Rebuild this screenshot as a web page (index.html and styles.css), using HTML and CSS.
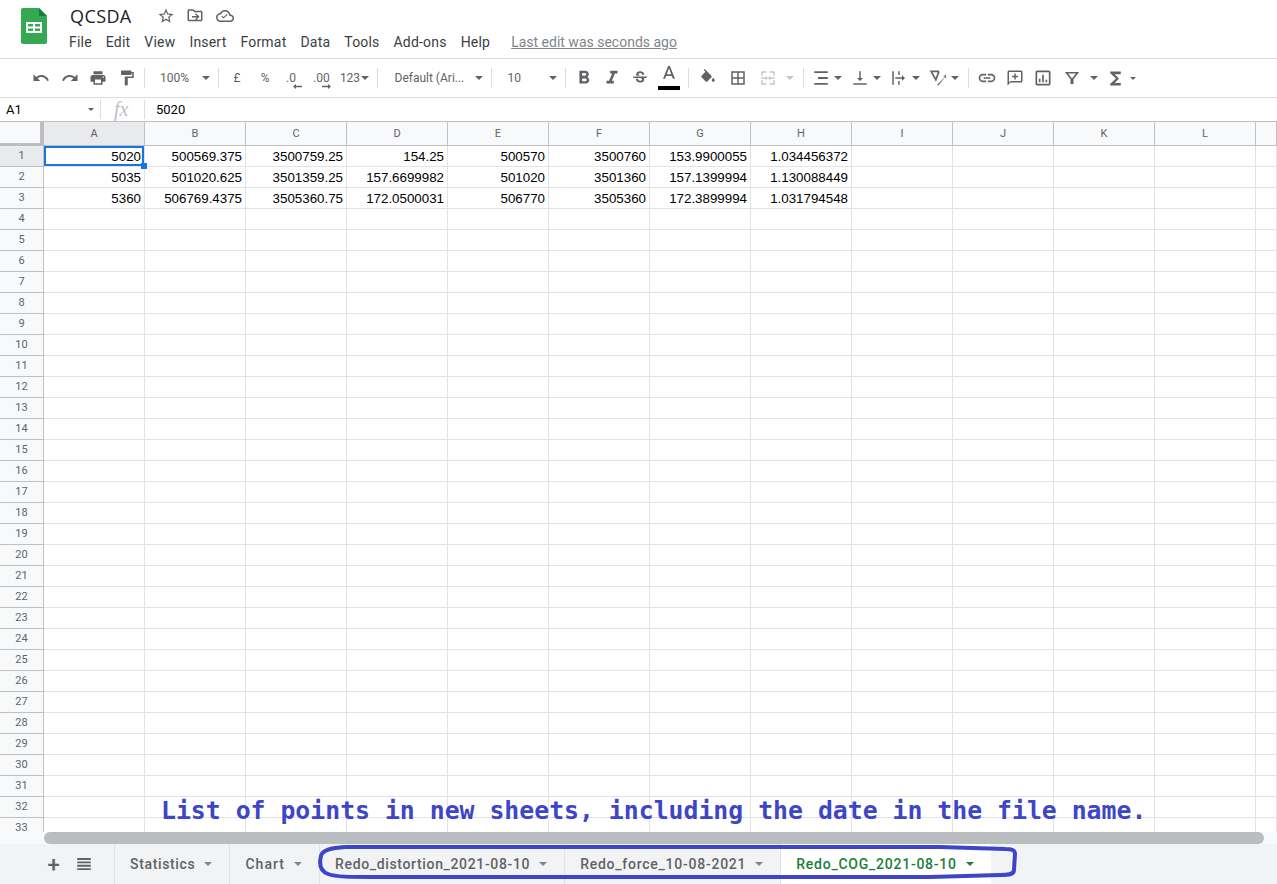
FILE: index.html
```html
<!DOCTYPE html>
<html lang="en">
<head>
    <meta charset="UTF-8">
    <title>QCSDA - Google Sheets</title>
    <link rel="stylesheet" href="styles.css">
</head>
<body>
    <div class="app">
        <header class="top">
            <svg class="logo" viewBox="0 0 26 36">
                <path fill="#34a853" d="M2 0h16l8 8v26a2 2 0 0 1-2 2H2a2 2 0 0 1-2-2V2a2 2 0 0 1 2-2z"/>
                <path fill="#188038" d="M18 0l8 8h-8z"/>
                <path fill="#fff" d="M5 14h16v11H5zm2 2v2.5h5V16zm7 0v2.5h5V16zm-7 4.5V23h5v-2.5zm7 0V23h5v-2.5z" fill-rule="evenodd"/>
            </svg>
            <div class="top-main">
                <div class="title-row">
                    <span class="doc-title">QCSDA</span>
                    <svg class="title-ico star-ico" viewBox="0 0 24 24"><path d="M22 9.24l-7.19-.62L12 2 9.19 8.63 2 9.24l5.46 4.73L5.82 21 12 17.27 18.18 21l-1.63-7.03L22 9.24zM12 15.4l-3.76 2.27 1-4.28-3.32-2.88 4.38-.38L12 6.1l1.71 4.04 4.38.38-3.32 2.88 1 4.28L12 15.4z"/></svg>
                    <svg class="title-ico" viewBox="0 0 24 24"><path d="M20 6h-8l-2-2H4c-1.1 0-2 .9-2 2v12c0 1.1.9 2 2 2h16c1.1 0 2-.9 2-2V8c0-1.1-.9-2-2-2zm0 12H4V6h5.17l2 2H20v10zM12 10.5l2.5 2.5H8v2h6.500L12 17.500l1.400 1.100L18 14l-4.600-4.600z" transform="translate(0 -1)"/></svg>
                    <svg class="title-ico" viewBox="0 0 24 24"><path d="M19.35 10.04C18.67 6.590 15.640 4 12 4 9.110 4 6.600 5.640 5.350 8.040 2.340 8.360 0 10.910 0 14c0 3.310 2.690 6 6 6h13c2.760 0 5-2.240 5-5 0-2.640-2.050-4.780-4.650-4.960zM19 18H6c-2.210 0-4-1.790-4-4 0-2.050 1.530-3.760 3.560-3.970l1.070-.11.5-.95C8.080 7.140 9.940 6 12 6c2.620 0 4.880 1.860 5.390 4.430l.3 1.500 1.530.11c1.560.1 2.780 1.410 2.780 2.960 0 1.650-1.350 3-3 3zM10 13.200l-1.700-1.700-1.100 1.100 2.800 2.800 5.600-5.100-1.100-1.100z"/></svg>
                </div>
                <nav class="menu">
                    <span>File</span><span>Edit</span><span>View</span><span>Insert</span><span>Format</span><span>Data</span><span>Tools</span><span>Add-ons</span><span>Help</span>
                    <a class="last-edit">Last edit was seconds ago</a>
                </nav>
            </div>
        </header>

        <div class="toolbar">
            <span class="btn"><svg class="ico" viewBox="0 0 24 24"><path d="M12.500 8c-2.650 0-5.050.99-6.900 2.600L2 7v9h9l-3.620-3.620c1.390-1.160 3.160-1.880 5.120-1.880 3.540 0 6.550 2.310 7.600 5.500l2.370-.78C21.080 11.030 17.150 8 12.500 8z"/></svg></span>
            <span class="btn"><svg class="ico" viewBox="0 0 24 24"><path d="M18.400 10.600C16.550 8.990 14.150 8 11.500 8c-4.650 0-8.580 3.030-9.960 7.220L3.900 16c1.050-3.190 4.050-5.500 7.600-5.500 1.950 0 3.730.72 5.120 1.880L13 16h9V7l-3.600 3.600z"/></svg></span>
            <span class="btn"><svg class="ico" viewBox="0 0 24 24"><path d="M19 8H5c-1.660 0-3 1.340-3 3v6h4v4h12v-4h4v-6c0-1.660-1.340-3-3-3zm-3 11H8v-5h8v5zm3-7c-.55 0-1-.45-1-1s.45-1 1-1 1 .45 1 1-.45 1-1 1zm-1-9H6v4h12V3z"/></svg></span>
            <span class="btn"><svg class="ico" viewBox="0 0 24 24"><path d="M18 4V3c0-.55-.45-1-1-1H5c-.55 0-1 .45-1 1v4c0 .55.45 1 1 1h12c.55 0 1-.45 1-1V6h1v4H9v11c0 .55.45 1 1 1h2c.55 0 1-.45 1-1v-9h8V4h-3z"/></svg></span>
            <i class="sep sep-undo"></i>
            <span class="select select-zoom">100%<i class="caret"></i></span>
            <i class="sep"></i>
            <span class="btn btn-first">£</span>
            <span class="btn">%</span>
            <span class="btn"><svg class="num-ico" viewBox="0 0 28 24"><text x="6" y="16">.0</text><path d="M13 20.500l3-2.500v1.700h6v1.600h-6V23z"/></svg></span>
            <span class="btn"><svg class="num-ico" viewBox="0 0 28 24"><text x="5" y="16">.00</text><path d="M23 20.500l-3-2.500v1.700h-6v1.600h6V23z"/></svg></span>
            <span class="num-format">123<i class="caret"></i></span>
            <i class="sep sep-num"></i>
            <span class="select select-font">Default (Ari...<i class="caret"></i></span>
            <i class="sep"></i>
            <span class="select select-size">10<i class="caret"></i></span>
            <i class="sep"></i>
            <span class="btn btn-first"><svg class="ico ico-22" viewBox="0 0 24 24"><path d="M15.600 10.790c.97-.67 1.650-1.770 1.650-2.790 0-2.260-1.750-4-4-4H7v14h7.040c2.090 0 3.710-1.700 3.710-3.790 0-1.520-.86-2.820-2.150-3.420zM10 6.500h3c.83 0 1.500.67 1.500 1.500s-.67 1.500-1.500 1.500h-3v-3zm3.500 9H10v-3h3.500c.83 0 1.500.67 1.500 1.500s-.67 1.500-1.500 1.500z"/></svg></span>
            <span class="btn"><svg class="ico ico-22" viewBox="0 0 24 24"><path d="M10 4v3h2.210l-3.420 8H6v3h8v-3h-2.210l3.420-8H18V4z"/></svg></span>
            <span class="btn"><svg class="ico" viewBox="0 0 24 24"><path d="M6.850 7.080C6.850 4.370 9.450 3 12.240 3c1.640 0 3 .49 3.900 1.280.77.65 1.460 1.730 1.460 3.240h-3.010c0-.31-.05-.59-.15-.85-.29-.86-1.200-1.280-2.250-1.280-1.860 0-2.340 1.020-2.340 1.700 0 .48.25.88.74 1.210.38.25.77.48 1.410.7H7.390c-.21-.34-.54-.89-.54-1.920zM21 12v-2H3v2h9.620c1.150.45 1.960.75 1.960 1.970 0 1-.81 1.670-2.280 1.670-1.540 0-2.930-.54-2.930-2.510H6.400c0 .55.08 1.130.24 1.580.81 2.290 3.290 3.300 5.670 3.300 2.270 0 5.300-.89 5.300-4.050 0-.3-.01-1.160-.48-1.940H21V12z"/></svg></span>
            <span class="btn btn-color"><svg class="ico ico-22" viewBox="0 0 24 24"><path d="M11 1L5.500 15h2.250l1.120-3h6.250l1.120 3h2.250L13 1h-2zm-1.380 9L12 3.670 14.380 10H9.620z"/></svg><i class="color-bar"></i></span>
            <i class="sep sep-color"></i>
            <span class="btn btn-fill"><svg class="ico" viewBox="0 0 24 24"><path d="M16.560 8.940L7.620 0 6.210 1.410l2.380 2.380-5.150 5.150c-.59.59-.59 1.540 0 2.120l5.500 5.500c.29.29.68.44 1.060.44s.77-.15 1.060-.44l5.500-5.500c.59-.58.59-1.530 0-2.120zM19 11.500s-2 2.170-2 3.500c0 1.100.9 2 2 2s2-.9 2-2c0-1.330-2-3.500-2-3.500z"/></svg></span>
            <span class="btn btn-grid"><svg class="ico" viewBox="0 0 24 24"><path d="M3 3v18h18V3H3zm8 16H5v-6h6v6zm0-8H5V5h6v6zm8 8h-6v-6h6v6zm0-8h-6V5h6v6z"/></svg></span>
            <span class="btn btn-grid"><svg class="ico ico-off" viewBox="0 0 24 24"><path d="M3 3h7v2H5v4H3zm11 0h7v6h-2V5h-5zM3 15h2v4h5v2H3zm16 0h2v6h-7v-2h5zM3 11h6V9l3 3-3 3v-2H3zm18 0h-6V9l-3 3 3 3v-2h6z"/></svg></span>
            <span class="caret-box"><i class="caret caret-off"></i></span>
            <i class="sep sep-merge"></i>
            <span class="dd"><svg class="ico" viewBox="0 0 24 24"><path d="M3 3h18v2.400H3zm5 7.800h13v2.400H8zM3 18.600h18V21H3z"/></svg><i class="caret"></i></span>
            <span class="dd"><svg class="ico" viewBox="0 0 24 24"><path d="M16 12h-3V3h-2v9H8l4 4zM3 19h18v2H3z"/></svg><i class="caret"></i></span>
            <span class="dd"><svg class="ico" viewBox="0 0 24 24"><path d="M3 3h2v18H3zm8 0h2v5h-2zm0 13h2v5h-2zM7 11h9V8l4 4-4 4v-3H7z"/></svg><i class="caret"></i></span>
            <span class="dd"><svg class="ico ico-20" viewBox="0 0 24 24"><path d="M2 3h11l.9 2.100L9.600 16.400 2 3zm3.400 2l3.800 6.600L11.700 5zM11 20l9.500-9.500-2.500-.5 4-2-1 5-1-1.500L12.500 21z"/></svg><i class="caret"></i></span>
            <i class="sep sep-rotate"></i>
            <span class="btn btn-first"><svg class="ico ico-20" viewBox="0 0 24 24"><path d="M3.900 12c0-1.710 1.390-3.100 3.100-3.100h4V7H7c-2.760 0-5 2.240-5 5s2.240 5 5 5h4v-1.900H7c-1.710 0-3.100-1.390-3.100-3.100zM8 13h8v-2H8v2zm9-6h-4v1.900h4c1.710 0 3.100 1.390 3.100 3.100s-1.390 3.100-3.100 3.100h-4V17h4c2.760 0 5-2.240 5-5s-2.240-5-5-5z"/></svg></span>
            <span class="btn"><svg class="ico" viewBox="0 0 24 24"><path d="M20 2H4c-1.100 0-2 .9-2 2v18l4-4h14c1.100 0 2-.9 2-2V4c0-1.100-.9-2-2-2zm0 14H6l-2 2V4h16v12zM13 6h-2v3H8v2h3v3h2v-3h3V9h-3z"/></svg></span>
            <span class="btn"><svg class="ico ico-20" viewBox="0 0 24 24"><path d="M19 3H5c-1.100 0-2 .9-2 2v14c0 1.100.9 2 2 2h14c1.100 0 2-.9 2-2V5c0-1.100-.9-2-2-2zm0 16H5V5h14v14zM7 13h2v4H7zm4-5h2v9h-2zm4 6h2v3h-2z"/></svg></span>
            <span class="btn"><svg class="ico" viewBox="0 0 24 24"><path d="M2.500 4h19l-7.500 9.500V20h-4v-6.500zm4.300 2L12 12.500 17.200 6z" fill-rule="evenodd"/></svg></span>
            <span class="caret-box caret-box-filter"><i class="caret"></i></span>
            <span class="btn"><svg class="ico ico-21" viewBox="0 0 24 24"><path d="M18 4H6v2l6.500 6L6 18v2h12v-3h-7l5-5-5-5h7z"/></svg></span>
            <span class="caret-small"><i class="caret"></i></span>
        </div>

        <div class="formula-bar">
            <div class="name-box">A1<i class="caret caret-tiny"></i></div>
            <div class="fx">fx</div>
            <div class="formula-value">5020</div>
        </div>

        <div class="sheet">
            <div class="grid" id="grid"></div>
            <div class="note">List of points in new sheets, including the date in the file name.</div>
        </div>

        <div class="scroll-row"><div class="scroll-thumb"></div></div>

        <footer class="tabs">
            <span class="tab-tool tab-add">+</span>
            <span class="tab-tool tab-list"><svg class="ico" viewBox="0 0 24 24"><path d="M3 4h18v2.500H3zm0 4.500h18V11H3zM3 13h18v2.500H3zm0 4.500h18V20H3z"/></svg></span>
            <span class="tab tab-tight">Statistics<i class="caret"></i></span>
            <span class="tab tab-wide">Chart<i class="caret"></i></span>
            <span class="tab tab-tight">Redo_distortion_2021-08-10<i class="caret"></i></span>
            <span class="tab">Redo_force_10-08-2021<i class="caret"></i></span>
            <span class="tab tab-active">Redo_COG_2021-08-10<i class="caret"></i></span>
        </footer>

        <svg class="scribble" viewBox="0 0 1277 884">
            <path d="M345 847C331 848 322 850 321 856C319 864 320 871 328 874C336 877 350 877 372 877L930 877L1000 875C1010 875 1014 874 1014 870L1015 854C1015 850 1012 849 1005 849L940 847L345 847"/>
        </svg>
    </div>
    <script src="script.js"></script>
</body>
</html>
```

FILE: styles.css
```css
* {
    box-sizing: border-box;
}
html, body {
    margin: 0;
    padding: 0;
    height: 100%;
    overflow: hidden;
}
body {
    font-family: Roboto, "Liberation Sans", sans-serif;
    color: #3c4043;
    background: #fff;
}
.app {
    position: relative;
    display: flex;
    flex-direction: column;
    height: 884px;
    overflow: hidden;
}

/* title and menu */
.top {
    display: flex;
    height: 59px;
    border-bottom: 1px solid #dadce0;
}
.logo {
    width: 26px;
    height: 36px;
    margin: 8px 0 0 21px;
}
.top-main {
    margin-left: 22px;
}
.title-row {
    display: flex;
    align-items: center;
    height: 31px;
}
.doc-title {
    font-family: "Open Sans", Roboto, sans-serif;
    font-size: 18px;
    letter-spacing: .4px;
    color: #202124;
    width: 88px;
    padding-left: 1px;
}
.title-ico {
    width: 18px;
    height: 18px;
    fill: #5f6368;
    margin-right: 12px;
}
.star-ico {
    margin-right: 11px;
}
.menu {
    display: flex;
    font-size: 14px;
    line-height: 22px;
    color: #3c4043;
}
.menu span {
    margin-right: 14px;
    letter-spacing: .2px;
}
.last-edit {
    margin-left: 7px;
    color: #80868b;
    text-decoration: underline;
}

/* toolbar */
.toolbar {
    display: flex;
    align-items: center;
    height: 39px;
    padding-left: 27px;
    border-bottom: 1px solid #dadce0;
    font-size: 12px;
    color: #5f6368;
}
.ico {
    width: 18px;
    height: 18px;
    fill: #5f6368;
    display: block;
    flex: none;
}
.ico-20 {
    width: 20px;
    height: 20px;
}
.ico-21 {
    width: 21px;
    height: 21px;
}
.ico-22 {
    width: 22px;
    height: 22px;
}
.ico-off {
    fill: #c4c7c5;
}
.btn {
    position: relative;
    display: flex;
    align-items: center;
    justify-content: center;
    width: 28.5px;
    height: 24px;
    flex: none;
}
.btn-first {
    margin-left: 4px;
    width: 28px;
}
.sep {
    flex: none;
    width: 1px;
    height: 20px;
    background: #dadce0;
}
.sep-undo { margin-left: 3px; }
.sep-num { margin-left: 4px; }
.sep-color { margin-left: 5px; }
.sep-merge { margin-left: 5px; }
.sep-rotate { margin-left: 8px; }
.caret {
    display: inline-block;
    flex: none;
    width: 0;
    height: 0;
    border-left: 4px solid transparent;
    border-right: 4px solid transparent;
    border-top: 4px solid #5f6368;
}
.caret-off {
    border-top-color: #c4c7c5;
}
.caret-tiny {
    border-width: 3px 3px 0;
}
.select {
    display: flex;
    align-items: center;
    justify-content: space-between;
    flex: none;
    height: 24px;
    padding-right: 8px;
}
.select-zoom { width: 73px; padding-left: 15px; }
.select-font { width: 113px; padding-left: 17px; }
.select-size { width: 73px; padding-left: 16px; }
.num-ico {
    width: 28px;
    height: 24px;
    fill: #5f6368;
}
.num-ico text {
    font-size: 12px;
}
.num-format {
    display: flex;
    align-items: center;
    justify-content: center;
    gap: 1px;
    width: 36px;
    flex: none;
}
.btn-color .ico {
    margin-top: -4px;
}
.color-bar {
    position: absolute;
    left: 3px;
    right: 3px;
    bottom: 0;
    height: 4px;
    background: #000;
}
.btn-color {
    width: 28px;
}
.btn-fill {
    margin-left: 5px;
    width: 28px;
}
.btn-grid {
    margin-left: 2px;
    width: 28px;
}
.caret-box {
    display: flex;
    align-items: center;
    justify-content: center;
    flex: none;
    width: 16px;
}
.caret-box-filter {
    width: 15px;
}
.caret-small {
    display: flex;
    align-items: center;
    justify-content: center;
    flex: none;
    width: 6px;
}
.caret-small .caret {
    border-width: 3px 3px 0;
}
.dd {
    display: flex;
    align-items: center;
    gap: 4px;
    flex: none;
    width: 39px;
    padding-left: 8px;
}
.dd .ico-20 {
    margin-left: -1px;
    margin-right: -1px;
}

/* formula bar */
.formula-bar {
    display: flex;
    align-items: center;
    height: 24px;
    border-bottom: 1px solid #c0c0c0;
    font-size: 13px;
    color: #000;
}
.name-box {
    display: flex;
    align-items: center;
    justify-content: space-between;
    width: 101px;
    height: 19px;
    padding: 0 6px;
    border-right: 1px solid #dadce0;
}
.fx {
    width: 44px;
    height: 19px;
    padding-left: 13px;
    border-right: 1px solid #dadce0;
    font-family: "Liberation Serif", serif;
    font-style: italic;
    font-size: 20px;
    line-height: 19px;
    color: #bdc1c6;
}
.formula-value {
    padding-left: 11px;
}

/* cells */
.sheet {
    position: relative;
    flex: 1;
    min-height: 0;
    overflow: hidden;
}
.grid {
    display: grid;
    grid-template-columns: 44px repeat(12, 101px) 21px;
    grid-auto-rows: 21px;
    grid-template-rows: 24px;
}
.cell {
    position: relative;
    border-right: 1px solid #e2e3e3;
    border-bottom: 1px solid #e2e3e3;
    padding-right: 3px;
    font-family: "Liberation Sans", Arial, sans-serif;
    font-size: 13.33px;
    line-height: 22px;
    text-align: right;
    color: #000;
    white-space: nowrap;
}
.col-head, .row-head {
    background: #f8f9fa;
    border-color: #c0c0c0;
    font-family: Roboto, sans-serif;
    color: #5f6368;
    text-align: center;
    padding: 0;
}
.col-head {
    font-size: 11px;
    line-height: 23px;
}
.row-head {
    font-size: 11px;
    line-height: 19px;
}
.corner {
    background: #f8f9fa;
    border-right: 4px solid #bdbdbd;
    border-bottom: 3px solid #bdbdbd;
    padding: 0;
}
.is-active {
    background: #e8eaed;
}
.selected {
    box-shadow: inset 0 0 0 2px #1a73e8;
    overflow: visible;
}
.selected::after {
    content: "";
    position: absolute;
    right: -3px;
    bottom: -3px;
    width: 6px;
    height: 6px;
    background: #1a73e8;
    z-index: 2;
}
.note {
    position: absolute;
    left: 161px;
    top: 674px;
    font-family: "DejaVu Sans Mono", monospace;
    font-weight: bold;
    font-size: 24.8px;
    line-height: 30px;
    color: #3d45c9;
    white-space: nowrap;
    z-index: 3;
}

/* scrollbar and tabs */
.scroll-row {
    flex: none;
    height: 12px;
    padding-left: 44px;
    background: #f8f9fa;
}
.scroll-thumb {
    width: 1220px;
    height: 12px;
    border-radius: 6px;
    background: #babdc0;
}
.tabs {
    display: flex;
    flex: none;
    height: 40px;
    align-items: stretch;
    background: #f1f3f4;
    font-size: 14px;
    font-weight: 500;
    letter-spacing: .75px;
    color: #5f6368;
}
.tab-tool {
    display: flex;
    align-items: center;
    justify-content: center;
    flex: none;
    width: 30px;
}
.tab-add {
    margin-left: 39px;
    font-size: 22px;
    font-weight: 500;
}
.tab-list {
    margin-right: 15px;
}
.tab {
    display: flex;
    align-items: center;
    gap: 9px;
    flex: none;
    padding: 0 17px 0 15px;
    border-left: 1px solid #e2e3e3;
}
.tab-tight {
    letter-spacing: .65px;
}
.tab-wide {
    letter-spacing: 1.05px;
}
.tab .caret {
    border-color: #80868b transparent transparent;
}
.tab-active {
    background: #fff;
    color: #188038;
}
.tab-active .caret {
    border-top-color: #188038;
}
.scribble {
    position: absolute;
    left: 0;
    top: 0;
    width: 1277px;
    height: 884px;
    fill: none;
    stroke: #3d45c9;
    stroke-width: 4;
    pointer-events: none;
    z-index: 4;
}
```

FILE: script.js
```js
const columns = ['A', 'B', 'C', 'D', 'E', 'F', 'G', 'H', 'I', 'J', 'K', 'L'];
const rows = [
    ['5020', '500569.375', '3500759.25', '154.25', '500570', '3500760', '153.9900055', '1.034456372'],
    ['5035', '501020.625', '3501359.25', '157.6699982', '501020', '3501360', '157.1399994', '1.130088449'],
    ['5360', '506769.4375', '3505360.75', '172.0500031', '506770', '3505360', '172.3899994', '1.031794548']
];
const rowCount = 33;

function addCell(grid, text, className) {
    const cell = document.createElement('div');
    cell.className = 'cell ' + className;
    cell.textContent = text;
    grid.appendChild(cell);
}

function buildGrid() {
    const grid = document.getElementById('grid');

    addCell(grid, '', 'corner');
    columns.forEach((name, i) => {
        addCell(grid, name, 'col-head' + (i === 0 ? ' is-active' : ''));
    });
    addCell(grid, '', 'col-head');

    for (let r = 0; r < rowCount; r++) {
        addCell(grid, r + 1, 'row-head' + (r === 0 ? ' is-active' : ''));
        columns.forEach((name, c) => {
            const value = rows[r] && rows[r][c] ? rows[r][c] : '';
            addCell(grid, value, r === 0 && c === 0 ? 'selected' : '');
        });
        addCell(grid, '', '');
    }
}

buildGrid();
```
